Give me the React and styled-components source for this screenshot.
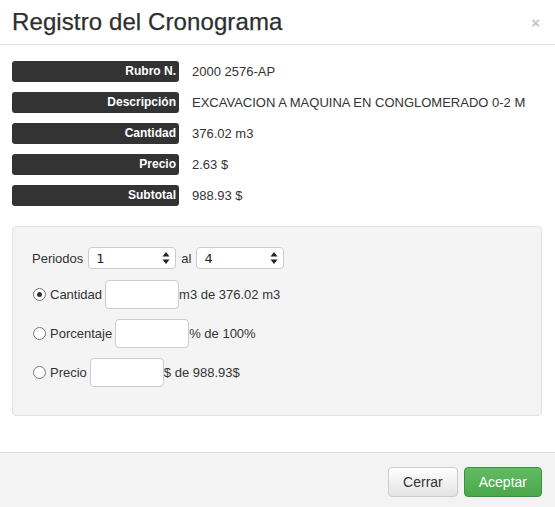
import styled, { createGlobalStyle } from "styled-components";

const GlobalStyle = createGlobalStyle`
  html, body {
    margin: 0;
    padding: 0;
    background: #ffffff;
  }
  body {
    font-family: "Liberation Sans", Arial, sans-serif;
    color: #333333;
  }
  * {
    box-sizing: border-box;
  }
`;

const info = [
  { label: "Rubro N.", value: "2000 2576-AP" },
  { label: "Descripción", value: "EXCAVACION A MAQUINA EN CONGLOMERADO 0-2 M" },
  { label: "Cantidad", value: "376.02 m3" },
  { label: "Precio", value: "2.63 $" },
  { label: "Subtotal", value: "988.93 $" },
];

const options = [
  { label: "Cantidad", suffix: "m3 de 376.02 m3", checked: true },
  { label: "Porcentaje", suffix: "% de 100%" },
  { label: "Precio", suffix: "$ de 988.93$" },
];

function Spinner({ value }) {
  return (
    <SpinBox>
      <span>{value}</span>
      <svg width="8" height="14" viewBox="0 0 8 14">
        <path d="M4 1 L7.5 5.5 L0.5 5.5 Z" fill="#222" />
        <path d="M4 13 L7.5 8.5 L0.5 8.5 Z" fill="#222" />
      </svg>
    </SpinBox>
  );
}

function App() {
  return (
    <>
      <GlobalStyle />
      <Modal>
        <Header>
          <Title>Registro del Cronograma</Title>
          <Close>×</Close>
        </Header>

        <Body>
          <InfoList>
            {info.map((row) => (
              <InfoRow key={row.label}>
                <Tag>{row.label}</Tag>
                <Value>{row.value}</Value>
              </InfoRow>
            ))}
          </InfoList>

          <Well>
            <PeriodRow>
              <Text>Periodos</Text>
              <Spinner value="1" />
              <Text>al</Text>
              <Spinner value="4" />
            </PeriodRow>

            {options.map((opt) => (
              <OptionRow key={opt.label}>
                <Radio $checked={opt.checked} />
                <Text>{opt.label}</Text>
                <Field />
                <Suffix>{opt.suffix}</Suffix>
              </OptionRow>
            ))}
          </Well>
        </Body>

        <Footer>
          <Button>Cerrar</Button>
          <Button $primary>Aceptar</Button>
        </Footer>
      </Modal>
    </>
  );
}

export default App;

// modal
const Modal = styled.div`
  width: 555px;
  height: 507px;
  display: flex;
  flex-direction: column;
  background: #ffffff;
`;

const Header = styled.div`
  height: 45px;
  display: flex;
  align-items: center;
  justify-content: space-between;
  padding: 0 15px 0 12px;
  border-bottom: 1px solid #e5e5e5;
`;

const Title = styled.h3`
  margin: 0;
  font-size: 24px;
  font-weight: normal;
  letter-spacing: 0.1px;
  line-height: 1;
  color: #2e2e2e;
  -webkit-text-stroke: 0.25px #2e2e2e;
`;

const Close = styled.span`
  font-size: 15px;
  font-weight: bold;
  color: #c4c4c4;
  line-height: 1;
`;

const Body = styled.div`
  flex: 1;
  padding: 16px 13px 0 12px;
`;

// info rows
const InfoList = styled.div`
  display: flex;
  flex-direction: column;
  gap: 10px;
`;

const InfoRow = styled.div`
  display: flex;
  align-items: center;
  height: 21px;
`;

const Tag = styled.div`
  width: 167px;
  height: 21px;
  line-height: 21px;
  padding-right: 3px;
  border-radius: 3px;
  background: #333333;
  color: #ffffff;
  font-size: 12px;
  font-weight: bold;
  text-align: right;
`;

const Value = styled.div`
  margin-left: 13px;
  font-size: 13px;
  color: #333333;
`;

// well
const Well = styled.div`
  margin-top: 20px;
  height: 190px;
  padding: 20px 20px 0 19px;
  background: #f4f4f4;
  border: 1px solid #e3e3e3;
  border-radius: 4px;
  display: flex;
  flex-direction: column;
`;

const PeriodRow = styled.div`
  display: flex;
  align-items: center;
  gap: 5px;
  height: 22px;
  margin-bottom: 11px;
`;

const Text = styled.span`
  font-size: 13px;
  color: #333333;
`;

const SpinBox = styled.div`
  width: 88px;
  height: 22px;
  display: flex;
  align-items: center;
  justify-content: space-between;
  padding: 0 5px 0 7px;
  background: #ffffff;
  border: 1px solid #cccccc;
  border-radius: 4px;
  font-family: "DejaVu Sans", sans-serif;
  font-size: 13px;
  color: #222222;
`;

const OptionRow = styled.div`
  display: flex;
  align-items: center;
  height: 29px;
  margin-bottom: 10px;
`;

const Radio = styled.span`
  width: 13px;
  height: 13px;
  margin-left: 1px;
  margin-right: 4px;
  border-radius: 50%;
  border: 1px solid #777777;
  background: #ffffff;
  display: flex;
  align-items: center;
  justify-content: center;

  &::after {
    content: "";
    width: 5px;
    height: 5px;
    border-radius: 50%;
    background: ${(p) => (p.$checked ? "#333333" : "transparent")};
  }
`;

const Field = styled.div`
  width: 74px;
  height: 29px;
  margin-left: 3px;
  background: #ffffff;
  border: 1px solid #cccccc;
  border-radius: 4px;
`;

const Suffix = styled.span`
  font-size: 13px;
  color: #333333;
`;

// footer
const Footer = styled.div`
  height: 55px;
  display: flex;
  justify-content: flex-end;
  align-items: flex-start;
  gap: 6px;
  padding: 14px 13px 0 0;
  background: #f3f3f3;
  border-top: 1px solid #dddddd;
`;

const Button = styled.button`
  height: 30px;
  padding: 0 14px;
  font-family: "Liberation Sans", Arial, sans-serif;
  font-size: 14px;
  border-radius: 4px;
  cursor: pointer;
  color: ${(p) => (p.$primary ? "#ffffff" : "#333333")};
  border: 1px solid ${(p) => (p.$primary ? "#3e8f3e" : "#cccccc")};
  background: ${(p) =>
    p.$primary
      ? "linear-gradient(#62bd62, #4aa74a)"
      : "linear-gradient(#ffffff, #e3e3e3)"};
`;
